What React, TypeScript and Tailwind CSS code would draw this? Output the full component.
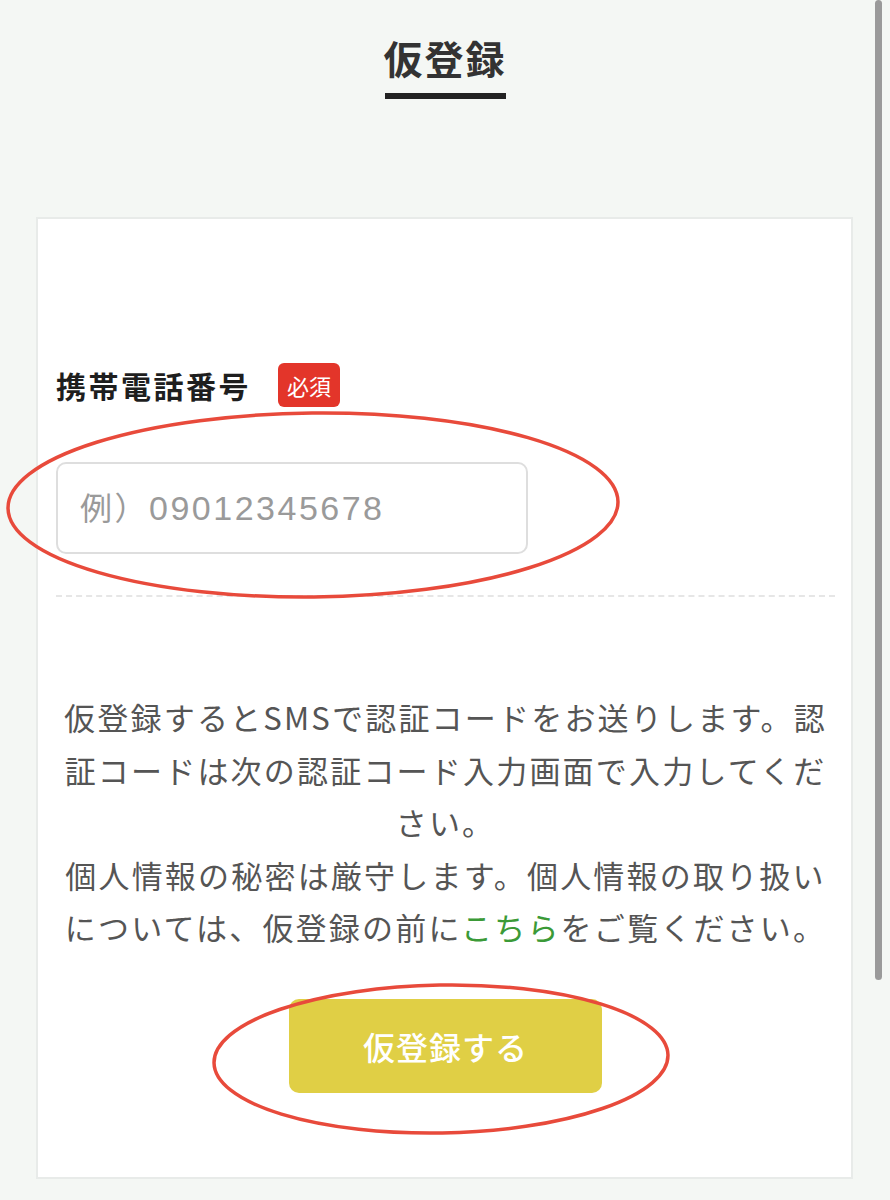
import React from "react";

export default function App() {
  return (
    <div
      className="relative min-h-[1200px] w-full overflow-hidden bg-[#f4f7f4]"
      style={{ fontFamily: '"Noto Sans CJK JP", "Noto Sans", sans-serif' }}
    >
      <div className="flex flex-col items-center pt-[36px]">
        <h1 className="text-[39px] leading-[42px] font-bold tracking-[2px] text-[#333]">仮登録</h1>
        <div className="mt-[15px] h-[6px] w-[121px] bg-[#222]" />
      </div>

      <div className="mx-[36px] mr-[37px] mt-[118px] h-[962px] border-2 border-[#e8ebe9] bg-white pl-[18px] pr-[16px] pt-[144px]">
        <div className="flex items-center">
          <span className="text-[30px] leading-[44px] font-bold tracking-[2.5px] text-[#1e1e1e]">携帯電話番号</span>
          <span className="ml-[27px] flex h-[44px] w-[62px] items-center justify-center rounded-[6px] bg-[#e3352a] text-[22px] text-white">
            必須
          </span>
        </div>

        <div className="mt-[55px] flex h-[92px] w-[472px] items-center rounded-[10px] border-2 border-[#dedede] pl-[22px]">
          <span className="text-[32px] tracking-[2.5px] text-[#9a9a9a]">
            例）<span className="text-[34px] tracking-[2.5px]" style={{ fontFamily: '"Liberation Sans", "Noto Sans CJK JP", sans-serif' }}>09012345678</span>
          </span>
        </div>

        <div className="mt-[41px] border-t-2 border-dashed border-[#e6e6e6]" />

        <p className="mt-[94px] text-center text-[31px] leading-[52.5px] tracking-[2.2px] text-[#555]">
          仮登録するとSMSで認証コードをお送りします。認証コードは次の認証コード入力画面で入力してください。
          <br />
          個人情報の秘密は厳守します。個人情報の取り扱いについては、仮登録の前に
          <span className="text-[#3b9a37]">こちら</span>
          をご覧ください。
        </p>

        <div className="mt-[45px] flex justify-center">
          <button className="flex h-[94px] w-[313px] items-center justify-center rounded-[10px] bg-[#e0cf45] text-[32px] font-medium tracking-[1px] text-white">
            仮登録する
          </button>
        </div>
      </div>

      <div className="absolute left-[875px] top-0 h-[980px] w-[7px] rounded-full bg-[#9a9a9a]" />

      <svg className="pointer-events-none absolute left-0 top-0" width="890" height="1200" viewBox="0 0 890 1200">
        <ellipse cx="313" cy="505" rx="305" ry="92" fill="none" stroke="#e84a3b" strokeWidth="3.5" transform="rotate(-0.6 313 505)" />
        <ellipse cx="441" cy="1059" rx="227" ry="74" fill="none" stroke="#e84a3b" strokeWidth="3.5" transform="rotate(-1 441 1059)" />
      </svg>
    </div>
  );
}
